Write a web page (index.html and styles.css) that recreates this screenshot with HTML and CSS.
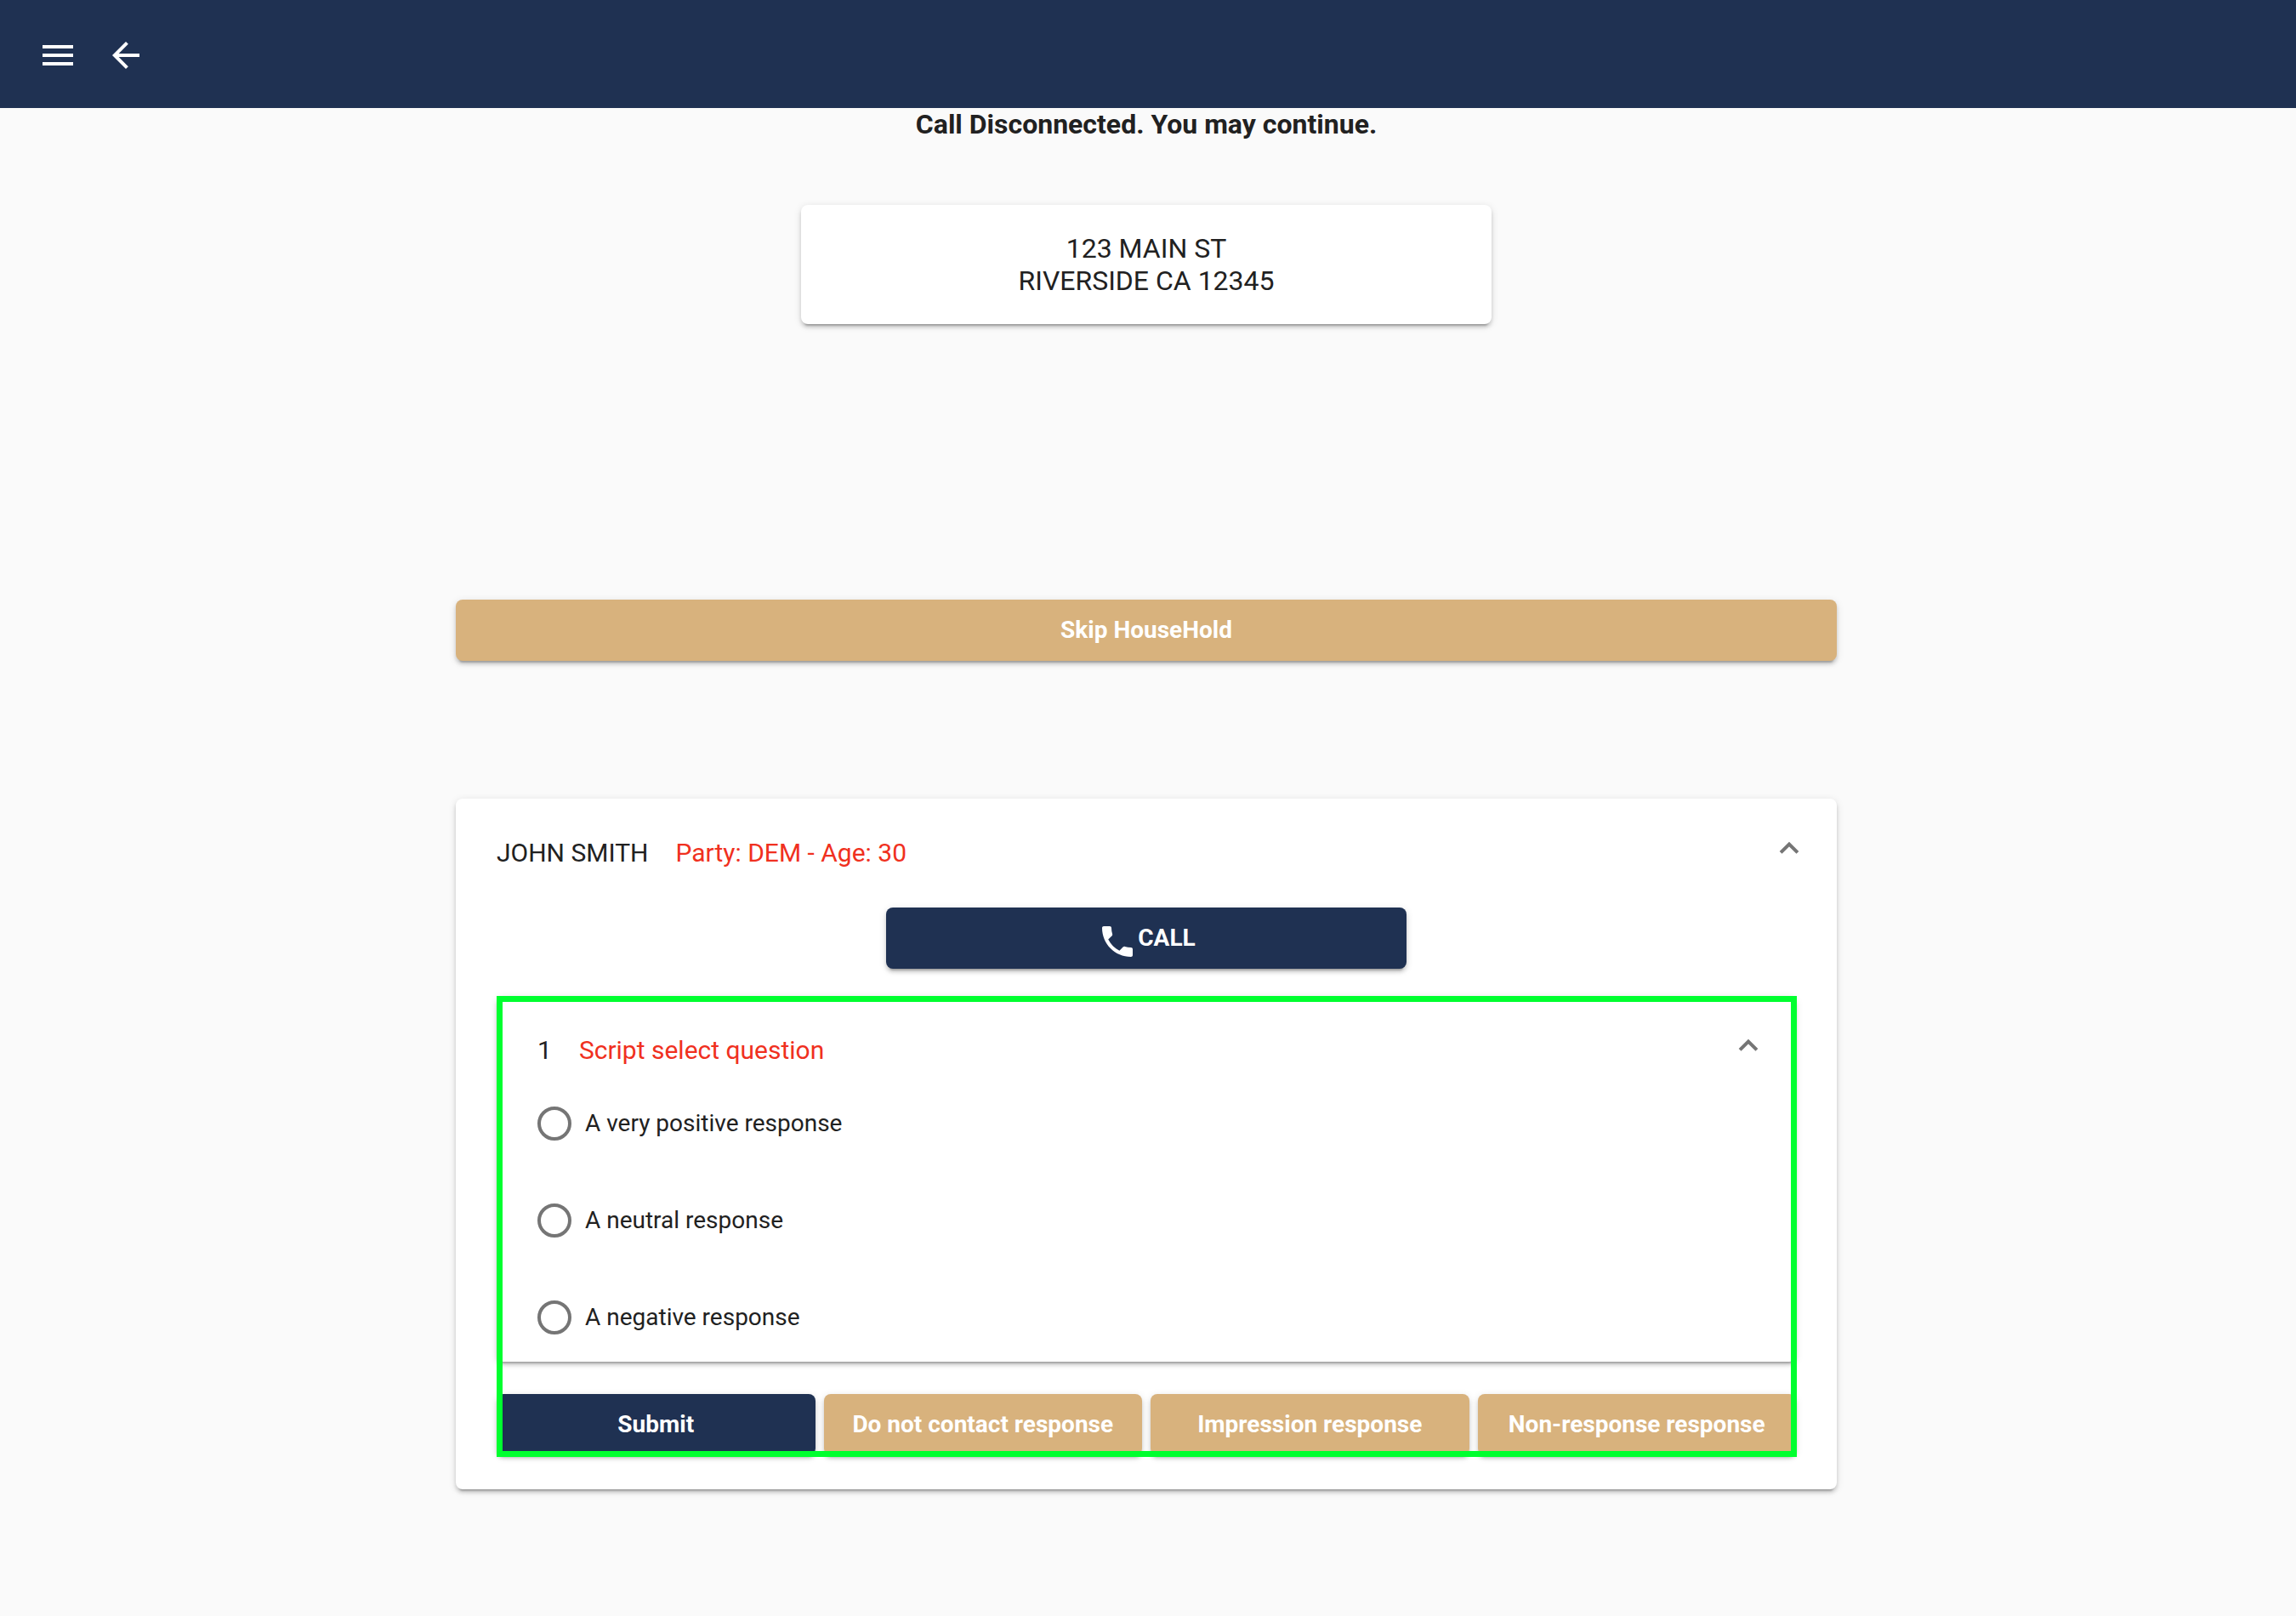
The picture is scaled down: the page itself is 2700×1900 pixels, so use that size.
FILE: index.html
```html
<!DOCTYPE html>
<html lang="en">
<head>
  <meta charset="utf-8">
  <meta name="viewport" content="width=device-width, initial-scale=1">
  <title>Phone Bank</title>
  <link rel="stylesheet" href="styles.css">
</head>
<body>
  <header class="toolbar">
    <button class="icon-button" type="button" aria-label="Menu">
      <svg class="icon" viewBox="0 0 24 24" aria-hidden="true"><path d="M3 18h18v-2H3v2zm0-5h18v-2H3v2zm0-7v2h18V6H3z"/></svg>
    </button>
    <button class="icon-button" type="button" aria-label="Back">
      <svg class="icon" viewBox="0 0 24 24" aria-hidden="true"><path d="M20 11H7.83l5.59-5.59L12 4l-8 8 8 8 1.41-1.41L7.83 13H20v-2z"/></svg>
    </button>
  </header>

  <main class="page">
    <h1 class="status">Call Disconnected. You may continue.</h1>

    <address class="address-card">123 MAIN ST<br>RIVERSIDE CA 12345</address>

    <button class="button button-accent skip-button" type="button">Skip HouseHold</button>

    <section class="panel person-panel">
      <button class="panel-header" type="button" aria-expanded="true">
        <span>JOHN SMITH</span>
        <span class="panel-detail">Party: DEM - Age: 30</span>
        <svg class="chevron" viewBox="0 0 16 28" aria-hidden="true"><path transform="translate(8 12) rotate(225)" d="M-8 6H6V-8"/></svg>
      </button>

      <button class="button button-primary call-button" type="button">
        <svg class="icon call-icon" viewBox="0 0 24 24" aria-hidden="true"><path d="M6.62 10.79c1.44 2.83 3.76 5.14 6.59 6.59l2.2-2.2c.27-.27.67-.36 1.02-.24 1.12.37 2.33.57 3.57.57.55 0 1 .45 1 1V20c0 .55-.45 1-1 1-9.39 0-17-7.61-17-17 0-.55.45-1 1-1h3.5c.55 0 1 .45 1 1 0 1.25.2 2.45.57 3.57.11.35.03.74-.25 1.02l-2.2 2.2z"/></svg>
        CALL
      </button>

      <form class="script">
        <div class="panel question-panel">
          <button class="panel-header" type="button" aria-expanded="true">
            <span>1</span>
            <span class="panel-detail" id="question-title">Script select question</span>
            <svg class="chevron" viewBox="0 0 16 28" aria-hidden="true"><path transform="translate(8 12) rotate(225)" d="M-8 6H6V-8"/></svg>
          </button>
          <div class="options" role="radiogroup" aria-labelledby="question-title">
            <label class="option"><input class="radio" type="radio" name="response" value="positive">A very positive response</label>
            <label class="option"><input class="radio" type="radio" name="response" value="neutral">A neutral response</label>
            <label class="option"><input class="radio" type="radio" name="response" value="negative">A negative response</label>
          </div>
        </div>
        <div class="actions">
          <button class="button button-primary" type="button">Submit</button>
          <button class="button button-accent" type="button">Do not contact response</button>
          <button class="button button-accent" type="button">Impression response</button>
          <button class="button button-accent" type="button">Non-response response</button>
        </div>
      </form>
    </section>
  </main>
</body>
</html>
```

FILE: styles.css
```css
:root {
  --navy: #1f3152;
  --tan: #d8b27d;
  --red: #f03020;
  --text: #212121;
  --elevation: 0 6px 2px -4px rgba(0, 0, 0, .2), 0 4px 4px 0 rgba(0, 0, 0, .14), 0 2px 10px 0 rgba(0, 0, 0, .12);
}

* {
  box-sizing: border-box;
}

body {
  margin: 0;
  background: #fafafa;
  color: var(--text);
  font-family: Roboto, "Liberation Sans", sans-serif;
  font-size: 32px;
  line-height: 38px;
}

button {
  border: 0;
  font: inherit;
  color: inherit;
  cursor: pointer;
}

/* Toolbar */
.toolbar {
  display: flex;
  gap: 32px;
  padding: 41px 44px 38px;
  background: var(--navy);
  color: #fff;
}

.icon-button {
  display: flex;
  padding: 0;
  background: none;
}

.icon {
  width: 48px;
  height: 48px;
  fill: currentColor;
}

/* Page column */
.page {
  display: flex;
  flex-direction: column;
  align-items: center;
  width: calc(100% - 4px);
  max-width: 1624px;
  margin: 0 auto;
  padding-bottom: 48px;
}

@media (min-width: 1700px) {
  .page {
    max-width: 1628px;
    padding-right: 4px;
  }
}

.status {
  margin: 0 0 76px;
  font-size: 32px;
  font-weight: 700;
  text-align: center;
}

.address-card {
  width: 50%;
  padding: 32px;
  border-radius: 8px;
  background: #fff;
  box-shadow: var(--elevation);
  font-style: normal;
  text-align: center;
}

/* Buttons */
.button {
  display: flex;
  align-items: center;
  justify-content: center;
  min-height: 72px;
  padding: 0 32px;
  border-radius: 8px;
  box-shadow: var(--elevation);
  color: #fff;
  font-size: 28px;
  font-weight: 700;
  line-height: 36px;
}

.button-primary {
  background: var(--navy);
}

.button-accent {
  background: var(--tan);
}

.skip-button {
  width: 100%;
  margin: 324px 0 162px;
}

.call-button {
  width: 40%;
  margin: 0 auto 32px;
}

.call-icon {
  margin-top: 8px;
}

/* Expansion panels */
.panel {
  width: 100%;
  padding: 0 48px;
  border-radius: 8px;
  background: #fff;
  box-shadow: var(--elevation);
}

.person-panel {
  padding-bottom: 40px;
}

.panel-header {
  display: flex;
  align-items: center;
  gap: 32px;
  width: 100%;
  min-height: 128px;
  padding: 0;
  background: none;
  font-size: 30px;
  line-height: 36px;
  text-align: left;
}

.panel-detail {
  color: var(--red);
}

.chevron {
  width: 16px;
  height: 28px;
  margin-left: auto;
  overflow: visible;
  fill: none;
  stroke: #757575;
  stroke-width: 4px;
}

/* Script question, outlined as the active step */
.script {
  position: relative;
}

.script::after {
  content: "";
  position: absolute;
  inset: 0 -1px -2px 0;
  border: 7px solid #00ff2f;
  pointer-events: none;
}

.options {
  display: flex;
  flex-direction: column;
  gap: 70px;
  padding-bottom: 30px;
}

.option {
  display: flex;
  align-items: center;
  gap: 16px;
  min-height: 44px;
  font-size: 28px;
  line-height: 36px;
}

.radio {
  appearance: none;
  flex: none;
  width: 40px;
  height: 40px;
  margin: 0;
  border: 4px solid #757575;
  border-radius: 50%;
  background: #fff;
}

.radio:checked {
  border-color: var(--navy);
  background: radial-gradient(circle, var(--navy) 10px, #fff 11px);
}

.actions {
  display: grid;
  grid-template-columns: repeat(auto-fit, minmax(372px, 1fr));
  gap: 10px;
  margin-top: 38px;
}
```
